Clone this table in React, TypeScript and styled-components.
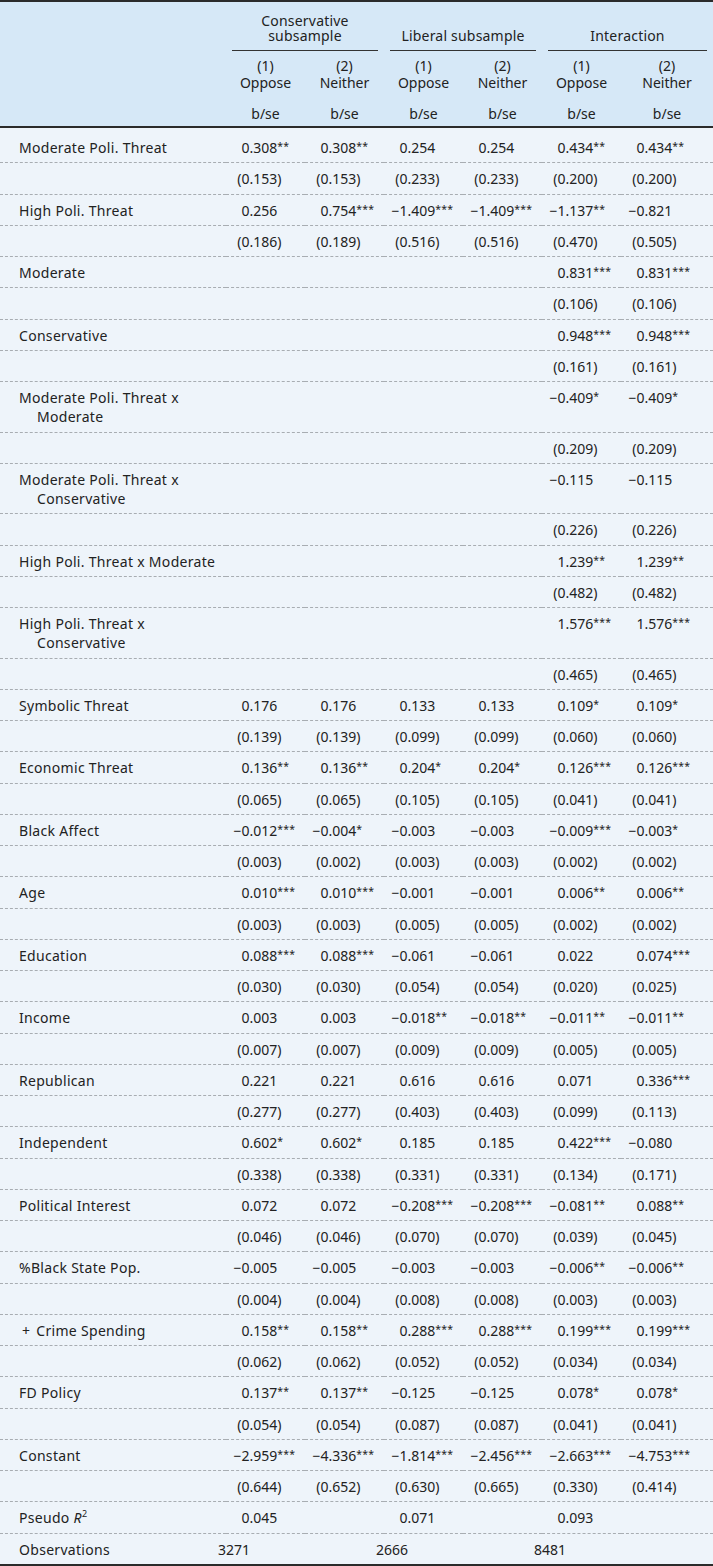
import React from "react";
import styled, { createGlobalStyle } from "styled-components";

const Global = createGlobalStyle`
  html, body { margin: 0; padding: 0; background: #eef4fa; }
  #root { width: 713px; }
`;

const Table = styled.table`
  width: 713px;
  border-collapse: collapse;
  table-layout: fixed;
  font-family: "Noto Sans", "Open Sans", sans-serif;
  font-size: 14px;
  color: #222;
  background: #eef4fa;
  border-top: 2px solid #2b2b2b;
  border-bottom: 2px solid #2b2b2b;
`;

const Head = styled.thead`
  background: #d6e8f7;
`;

const GroupTh = styled.th`
  font-weight: normal;
  text-align: center;
  vertical-align: bottom;
  line-height: 15px;
  padding: 11px 0 0 0;
  letter-spacing: 0.2px;
`;

const GroupTitle = styled.div`
  margin: 0 6px;
  padding-bottom: 7px;
  border-bottom: 1px solid #333;
`;

const ColTh = styled.th`
  font-weight: normal;
  text-align: center;
  line-height: 17px;
  padding: 6px 0 5px 0;
`;

const SeTh = styled.th`
  font-weight: normal;
  text-align: center;
  line-height: 20px;
  padding: 8px 0 2px 0;
  border-bottom: 2px solid #2b2b2b;
`;

const Row = styled.tr<{ $first?: boolean; $last?: boolean }>`
  & > td {
    line-height: 19.25px;
    padding: ${(p) => (p.$first ? "10px" : "6px")} 0 5px 0;
    border-bottom: ${(p) => (p.$last ? "none" : "1px dashed #a8adb2")};
    vertical-align: top;
  }
`;

const LabelCell = styled.td`
  padding-left: 19px !important;
  white-space: nowrap;
  letter-spacing: 0.3px;
`;

const Cont = styled.span`
  display: block;
  padding-left: 18px;
`;

const NumCell = styled.td`
  white-space: nowrap;
`;

const IntPart = styled.span`
  display: inline-block;
  width: 23.5px;
  text-align: right;
`;

const Stars = styled.span`
  font-size: 10.5px;
  vertical-align: 3px;
  line-height: 0;
  letter-spacing: 0.2px;
`;

const ObsValue = styled.span`
  margin-left: -8px;
`;

const Plus = styled.span`
  margin: 0 6px 0 3px;
`;

const Italic = styled.i``;
const Sup = styled.sup`
  font-size: 9px;
  line-height: 0;
  vertical-align: 6px;
`;

const Num: React.FC<{ v: string }> = ({ v }) => {
  if (!v) return <NumCell />;
  const m = v.match(/^(.*?)(\.\d+\)?)(\**)$/);
  if (!m) return <NumCell>{v}</NumCell>;
  return (
    <NumCell>
      <IntPart>{m[1]}</IntPart>
      {m[2]}
      {m[3] && <Stars>{m[3]}</Stars>}
    </NumCell>
  );
};

type Entry = { label: React.ReactNode[]; b: string[]; se: string[] };

const pad = (a: string[]) => (a.length === 2 ? ["", "", "", "", ...a] : a);

const data: Entry[] = [
  { label: ["Moderate Poli. Threat"], b: ["0.308**", "0.308**", "0.254", "0.254", "0.434**", "0.434**"], se: ["(0.153)", "(0.153)", "(0.233)", "(0.233)", "(0.200)", "(0.200)"] },
  { label: ["High Poli. Threat"], b: ["0.256", "0.754***", "−1.409***", "−1.409***", "−1.137**", "−0.821"], se: ["(0.186)", "(0.189)", "(0.516)", "(0.516)", "(0.470)", "(0.505)"] },
  { label: ["Moderate"], b: pad(["0.831***", "0.831***"]), se: pad(["(0.106)", "(0.106)"]) },
  { label: ["Conservative"], b: pad(["0.948***", "0.948***"]), se: pad(["(0.161)", "(0.161)"]) },
  { label: ["Moderate Poli. Threat x", "Moderate"], b: pad(["−0.409*", "−0.409*"]), se: pad(["(0.209)", "(0.209)"]) },
  { label: ["Moderate Poli. Threat x", "Conservative"], b: pad(["−0.115", "−0.115"]), se: pad(["(0.226)", "(0.226)"]) },
  { label: ["High Poli. Threat x Moderate"], b: pad(["1.239**", "1.239**"]), se: pad(["(0.482)", "(0.482)"]) },
  { label: ["High Poli. Threat x", "Conservative"], b: pad(["1.576***", "1.576***"]), se: pad(["(0.465)", "(0.465)"]) },
  { label: ["Symbolic Threat"], b: ["0.176", "0.176", "0.133", "0.133", "0.109*", "0.109*"], se: ["(0.139)", "(0.139)", "(0.099)", "(0.099)", "(0.060)", "(0.060)"] },
  { label: ["Economic Threat"], b: ["0.136**", "0.136**", "0.204*", "0.204*", "0.126***", "0.126***"], se: ["(0.065)", "(0.065)", "(0.105)", "(0.105)", "(0.041)", "(0.041)"] },
  { label: ["Black Affect"], b: ["−0.012***", "−0.004*", "−0.003", "−0.003", "−0.009***", "−0.003*"], se: ["(0.003)", "(0.002)", "(0.003)", "(0.003)", "(0.002)", "(0.002)"] },
  { label: ["Age"], b: ["0.010***", "0.010***", "−0.001", "−0.001", "0.006**", "0.006**"], se: ["(0.003)", "(0.003)", "(0.005)", "(0.005)", "(0.002)", "(0.002)"] },
  { label: ["Education"], b: ["0.088***", "0.088***", "−0.061", "−0.061", "0.022", "0.074***"], se: ["(0.030)", "(0.030)", "(0.054)", "(0.054)", "(0.020)", "(0.025)"] },
  { label: ["Income"], b: ["0.003", "0.003", "−0.018**", "−0.018**", "−0.011**", "−0.011**"], se: ["(0.007)", "(0.007)", "(0.009)", "(0.009)", "(0.005)", "(0.005)"] },
  { label: ["Republican"], b: ["0.221", "0.221", "0.616", "0.616", "0.071", "0.336***"], se: ["(0.277)", "(0.277)", "(0.403)", "(0.403)", "(0.099)", "(0.113)"] },
  { label: ["Independent"], b: ["0.602*", "0.602*", "0.185", "0.185", "0.422***", "−0.080"], se: ["(0.338)", "(0.338)", "(0.331)", "(0.331)", "(0.134)", "(0.171)"] },
  { label: ["Political Interest"], b: ["0.072", "0.072", "−0.208***", "−0.208***", "−0.081**", "0.088**"], se: ["(0.046)", "(0.046)", "(0.070)", "(0.070)", "(0.039)", "(0.045)"] },
  { label: ["%Black State Pop."], b: ["−0.005", "−0.005", "−0.003", "−0.003", "−0.006**", "−0.006**"], se: ["(0.004)", "(0.004)", "(0.008)", "(0.008)", "(0.003)", "(0.003)"] },
  { label: [<><Plus>+</Plus>Crime Spending</>], b: ["0.158**", "0.158**", "0.288***", "0.288***", "0.199***", "0.199***"], se: ["(0.062)", "(0.062)", "(0.052)", "(0.052)", "(0.034)", "(0.034)"] },
  { label: ["FD Policy"], b: ["0.137**", "0.137**", "−0.125", "−0.125", "0.078*", "0.078*"], se: ["(0.054)", "(0.054)", "(0.087)", "(0.087)", "(0.041)", "(0.041)"] },
  { label: ["Constant"], b: ["−2.959***", "−4.336***", "−1.814***", "−2.456***", "−2.663***", "−4.753***"], se: ["(0.644)", "(0.652)", "(0.630)", "(0.665)", "(0.330)", "(0.414)"] },
];

const groups = [["Conservative", "subsample"], ["Liberal subsample"], ["Interaction"]];
const cols = [
  ["(1)", "Oppose"], ["(2)", "Neither"],
  ["(1)", "Oppose"], ["(2)", "Neither"],
  ["(1)", "Oppose"], ["(2)", "Neither"],
];

export default function App() {
  return (
    <>
      <Global />
      <Table>
        <colgroup>
          <col style={{ width: 226 }} />
          <col style={{ width: 79 }} />
          <col style={{ width: 79 }} />
          <col style={{ width: 79 }} />
          <col style={{ width: 79 }} />
          <col style={{ width: 79 }} />
          <col style={{ width: 92 }} />
        </colgroup>
        <Head>
          <tr>
            <GroupTh />
            {groups.map((g, i) => (
              <GroupTh key={i} colSpan={2}>
                <GroupTitle>
                  {g.map((l, j) => (
                    <div key={j}>{l}</div>
                  ))}
                </GroupTitle>
              </GroupTh>
            ))}
          </tr>
          <tr>
            <ColTh />
            {cols.map((c, i) => (
              <ColTh key={i}>
                {c[0]}
                <br />
                {c[1]}
              </ColTh>
            ))}
          </tr>
          <tr>
            <SeTh />
            {cols.map((_, i) => (
              <SeTh key={i}>b/se</SeTh>
            ))}
          </tr>
        </Head>
        <tbody>
          {data.map((e, i) => (
            <React.Fragment key={i}>
              <Row $first={i === 0}>
                <LabelCell>
                  {e.label[0]}
                  {e.label[1] && <Cont>{e.label[1]}</Cont>}
                </LabelCell>
                {e.b.map((v, j) => (
                  <Num key={j} v={v} />
                ))}
              </Row>
              <Row>
                <LabelCell />
                {e.se.map((v, j) => (
                  <Num key={j} v={v} />
                ))}
              </Row>
            </React.Fragment>
          ))}
          <Row>
            <LabelCell>
              Pseudo <Italic>R</Italic>
              <Sup>2</Sup>
            </LabelCell>
            <Num v="0.045" />
            <Num v="" />
            <Num v="0.071" />
            <Num v="" />
            <Num v="0.093" />
            <Num v="" />
          </Row>
          <Row $last>
            <LabelCell>Observations</LabelCell>
            <NumCell colSpan={2}>
              <ObsValue>3271</ObsValue>
            </NumCell>
            <NumCell colSpan={2}>
              <ObsValue>2666</ObsValue>
            </NumCell>
            <NumCell colSpan={2}>
              <ObsValue>8481</ObsValue>
            </NumCell>
          </Row>
        </tbody>
      </Table>
    </>
  );
}
